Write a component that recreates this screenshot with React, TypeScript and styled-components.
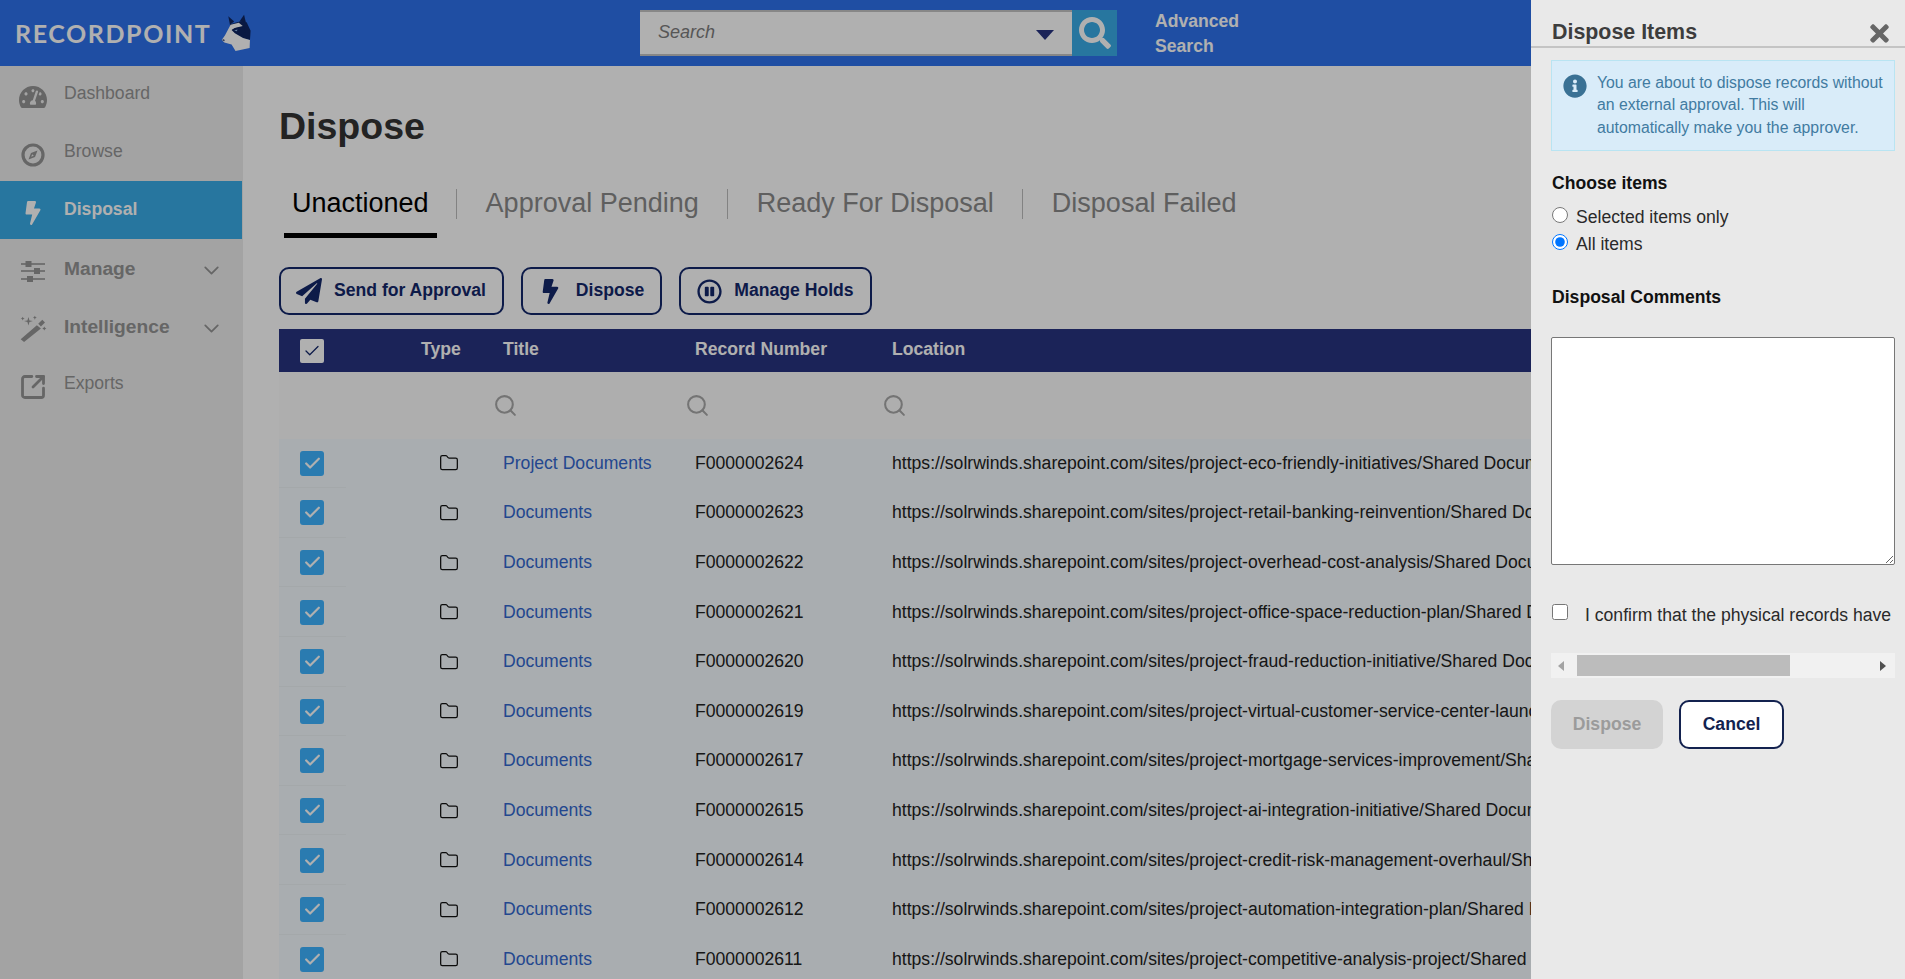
import React from 'react';
import styled, { createGlobalStyle } from 'styled-components';
import { Check, ChevronDown, Folder, Search, SquareArrowOutUpRight } from 'lucide-react';
import {
  FaBolt,
  FaInfoCircle,
  FaPaperPlane,
  FaRegPauseCircle,
  FaSearch,
  FaTachometerAlt,
  FaTimes,
} from 'react-icons/fa';

const NAVY = '#14286b';

const BASE_URL = 'https://solrwinds.sharepoint.com/sites/';

// the panel hides the end of each location, so only the part in view is kept
const records = [
  { id: 'F0000002624', title: 'Project Documents', path: 'project-eco-friendly-initiatives/Shared Docum' },
  { id: 'F0000002623', title: 'Documents', path: 'project-retail-banking-reinvention/Shared Doc' },
  { id: 'F0000002622', title: 'Documents', path: 'project-overhead-cost-analysis/Shared Docum' },
  { id: 'F0000002621', title: 'Documents', path: 'project-office-space-reduction-plan/Shared Do' },
  { id: 'F0000002620', title: 'Documents', path: 'project-fraud-reduction-initiative/Shared Doc' },
  { id: 'F0000002619', title: 'Documents', path: 'project-virtual-customer-service-center-launc' },
  { id: 'F0000002617', title: 'Documents', path: 'project-mortgage-services-improvement/Shar' },
  { id: 'F0000002615', title: 'Documents', path: 'project-ai-integration-initiative/Shared Docum' },
  { id: 'F0000002614', title: 'Documents', path: 'project-credit-risk-management-overhaul/Sha' },
  { id: 'F0000002612', title: 'Documents', path: 'project-automation-integration-plan/Shared Do' },
  { id: 'F0000002611', title: 'Documents', path: 'project-competitive-analysis-project/Shared D' },
];

const WolfLogo = () => (
  <svg width="33" height="41" viewBox="15 10 100 125">
    <polygon points="40,20 58,36 45,46" fill="#0f2560" />
    <polygon points="88,15 94,40 74,36" fill="#0f2560" />
    <polygon points="45,44 75,36 96,38 108,64 106,92 85,88 60,74 48,62" fill="#0f2560" />
    <polygon points="47,46 72,40 84,50 60,56 50,62 60,72 85,86 106,92 105,117 62,126 50,106 28,100 20,92 30,78" fill="#fff" />
    <polygon points="52,60 62,56 88,52 92,70 78,76 62,70" fill="#0f2560" />
    <polygon points="58,63 68,60 66,66" fill="#8db4e2" />
    <polygon points="20,92 27,90 29,96" fill="#0f2560" />
  </svg>
);

const CompassIcon = () => (
  <svg width="24" height="24" viewBox="0 0 24 24" fill="currentColor">
    <circle cx="12" cy="12" r="10" fill="none" stroke="currentColor" strokeWidth="3.2" />
    <path d="M16.5 7.5 14 14l-6.5 2.5L10 10zM11.2 11.2 10.2 13.8l2.6-1z" fillRule="evenodd" />
  </svg>
);

const SlidersIcon = () => (
  <svg width="24" height="22" viewBox="0 0 24 22" fill="currentColor">
    <rect x="0" y="3.2" width="24" height="1.6" />
    <rect x="0" y="10.2" width="24" height="1.6" />
    <rect x="0" y="18.2" width="24" height="1.6" />
    <rect x="4.5" y="1" width="6" height="6" />
    <rect x="13" y="8" width="6" height="6" />
    <rect x="6" y="16" width="6" height="6" />
  </svg>
);

const WandIcon = () => (
  <svg width="27" height="27" viewBox="30 190 80 80" fill="currentColor">
    <path d="M84 216 96 204 104 212 92 224zM32 262 80 220 92 230 42 270z" />
    <path d="M55 196 58 206 68 208 58 211 55 221 52 211 42 208 52 206z" />
    <path d="M38 195 40 199 44 200 40 202 38 206 36 202 32 200 36 199z" />
    <path d="M74 192 76 196 80 198 76 199 74 204 72 199 68 198 72 196z" />
    <path d="M102 224 104 228 108 230 104 232 102 236 100 232 96 230 100 228z" />
  </svg>
);

const navItems = [
  { label: 'Dashboard', icon: <FaTachometerAlt size={28} /> },
  { label: 'Browse', icon: <CompassIcon /> },
  { label: 'Disposal', icon: <FaBolt size={24} />, active: true },
  { label: 'Manage', icon: <SlidersIcon />, group: true },
  { label: 'Intelligence', icon: <WandIcon />, group: true },
  { label: 'Exports', icon: <SquareArrowOutUpRight size={30} strokeWidth={2.4} /> },
];

const tabs = ['Unactioned', 'Approval Pending', 'Ready For Disposal', 'Disposal Failed'];

const App: React.FC = () => {
  return (
    <Page>
      <GlobalStyle />
      <Header>
        <Brand>
          <BrandName>RECORDPOINT</BrandName>
          <WolfLogo />
        </Brand>
        <SearchBox>
          <SearchInput placeholder="Search" />
          <Caret />
        </SearchBox>
        <SearchButton>
          <FaSearch size={32} />
        </SearchButton>
        <AdvancedLink>
          Advanced
          <br />
          Search
        </AdvancedLink>
      </Header>

      <Body>
        <Sidebar>
          {navItems.map((item) => (
            <NavItem key={item.label} $active={item.active}>
              <NavIcon>{item.icon}</NavIcon>
              <NavLabel $active={item.active} $group={item.group}>
                {item.label}
              </NavLabel>
              {item.group && (
                <NavChevron>
                  <ChevronDown size={25} strokeWidth={1.7} />
                </NavChevron>
              )}
            </NavItem>
          ))}
        </Sidebar>

        <Main>
          <Title>Dispose</Title>
          <TabBar>
            {tabs.map((tab, i) => (
              <React.Fragment key={tab}>
                {i > 0 && <TabDivider />}
                <Tab $active={i === 0}>{tab}</Tab>
              </React.Fragment>
            ))}
          </TabBar>

          <Actions>
            <ActionButton>
              <ActionIcon>
                <FaPaperPlane size={26} />
              </ActionIcon>
              Send for Approval
            </ActionButton>
            <ActionButton>
              <ActionIcon>
                <FaBolt size={25} />
              </ActionIcon>
              Dispose
            </ActionButton>
            <ActionButton>
              <ActionIcon>
                <FaRegPauseCircle size={25} />
              </ActionIcon>
              Manage Holds
            </ActionButton>
          </Actions>

          <Table>
            <colgroup>
              <col width={142} />
              <col width={82} />
              <col width={192} />
              <col width={197} />
              <col />
            </colgroup>
            <thead>
              <HeadRow>
                <th>
                  <HeadCheck>
                    <Check size={18} strokeWidth={1.7} />
                  </HeadCheck>
                </th>
                <HeadCell>Type</HeadCell>
                <HeadCell>Title</HeadCell>
                <HeadCell>Record Number</HeadCell>
                <HeadCell>Location</HeadCell>
              </HeadRow>
              <FilterRow>
                <td />
                <td />
                <td>
                  <FilterIcon>
                    <Search size={25} strokeWidth={2} />
                  </FilterIcon>
                </td>
                <td>
                  <FilterIcon>
                    <Search size={25} strokeWidth={2} />
                  </FilterIcon>
                </td>
                <td>
                  <FilterIcon>
                    <Search size={25} strokeWidth={2} />
                  </FilterIcon>
                </td>
              </FilterRow>
            </thead>
            <tbody>
              {records.map((record) => (
                <Row key={record.id}>
                  <CheckCell>
                    <RowCheck>
                      <Check size={19} strokeWidth={2.8} />
                    </RowCheck>
                  </CheckCell>
                  <td>
                    <FolderIcon>
                      <Folder size={20} strokeWidth={1.5} />
                    </FolderIcon>
                  </td>
                  <td>
                    <TitleLink>{record.title}</TitleLink>
                  </td>
                  <td>{record.id}</td>
                  <LocationCell>
                    {BASE_URL}
                    {record.path}
                  </LocationCell>
                </Row>
              ))}
            </tbody>
          </Table>
        </Main>
      </Body>

      <Overlay />

      <Panel>
        <PanelHeader>
          <PanelTitle>Dispose Items</PanelTitle>
          <CloseButton>
            <FaTimes size={27} />
          </CloseButton>
        </PanelHeader>
        <PanelBody>
          <Alert>
            <AlertIcon>
              <FaInfoCircle size={24} />
            </AlertIcon>
            <span>You are about to dispose records without an external approval. This will automatically make you the approver.</span>
          </Alert>

          <FieldLabel>Choose items</FieldLabel>
          <RadioRow>
            <RadioInput type="radio" name="items" />
            Selected items only
          </RadioRow>
          <RadioRow>
            <RadioInput type="radio" name="items" defaultChecked />
            All items
          </RadioRow>

          <CommentsLabel>Disposal Comments</CommentsLabel>
          <Comments />

          <ConfirmRow>
            <ConfirmBox type="checkbox" />
            <ConfirmText>I confirm that the physical records have</ConfirmText>
          </ConfirmRow>
          <FakeScrollbar>
            <ScrollArrow $dir="left" />
            <ScrollThumb />
            <ScrollArrow $dir="right" />
          </FakeScrollbar>

          <PanelActions>
            <DisabledButton disabled>Dispose</DisabledButton>
            <CancelButton>Cancel</CancelButton>
          </PanelActions>
        </PanelBody>
      </Panel>
    </Page>
  );
};

export default App;

const GlobalStyle = createGlobalStyle`
  html, body {
    margin: 0;
    height: 100%;
    overflow: hidden;
  }
  body {
    font-family: "Liberation Sans", Arial, sans-serif;
    font-size: 17.6px;
    color: #222;
    background: #fff;
  }
  * {
    box-sizing: border-box;
  }
`;

const Page = styled.div`
  height: 100vh;
  display: flex;
  flex-direction: column;
  overflow: hidden;
`;

const Header = styled.header`
  flex: 0 0 66px;
  display: flex;
  align-items: center;
  background: #2d72ec;
`;

const Brand = styled.div`
  width: 640px;
  display: flex;
  align-items: center;
  padding-left: 15px;
  gap: 9px;
`;

const BrandName = styled.span`
  font-family: Lato, sans-serif;
  font-size: 25px;
  font-weight: 700;
  letter-spacing: 1.6px;
  color: #fff;
`;

const SearchBox = styled.div`
  position: relative;
  width: 432px;
  height: 46px;
  background: #fff;
  border-top: 2px solid #c4c4c4;
  border-bottom: 2px solid #c4c4c4;
`;

const SearchInput = styled.input`
  width: 100%;
  height: 100%;
  border: 0;
  outline: 0;
  padding: 0 50px 2px 18px;
  background: transparent;
  font-family: "Liberation Sans", Arial, sans-serif;
  font-size: 18px;
  font-style: italic;

  &::placeholder {
    color: #7d7d7d;
    opacity: 1;
  }
`;

const Caret = styled.span`
  position: absolute;
  top: 18px;
  right: 18px;
  border-left: 9px solid transparent;
  border-right: 9px solid transparent;
  border-top: 10px solid #283480;
`;

const SearchButton = styled.div`
  width: 45px;
  height: 46px;
  display: flex;
  align-items: center;
  justify-content: center;
  background: #39abe6;
  color: #fff;
`;

const AdvancedLink = styled.div`
  margin: 2px 0 0 38px;
  font-size: 17.6px;
  font-weight: 700;
  line-height: 25.5px;
  color: #fff;
`;

const Body = styled.div`
  flex: 1;
  display: flex;
  min-height: 0;
`;

const Sidebar = styled.nav`
  flex: 0 0 243px;
  background: #ececec;
`;

const NavItem = styled.div<{ $active?: boolean }>`
  height: 58px;
  margin-right: 1px;
  display: flex;
  align-items: center;
  background: ${(p) => (p.$active ? '#39abe6' : 'transparent')};
  color: ${(p) => (p.$active ? '#fff' : '#949494')};

  &:first-child {
    height: 57px;
  }
`;

const NavIcon = styled.span`
  width: 28px;
  margin: 5px 0 0 19px;
  display: flex;
  justify-content: center;
`;

const NavLabel = styled.span<{ $active?: boolean; $group?: boolean }>`
  margin: ${(p) => (p.$group ? '1px' : '-2px')} 0 0 17px;
  font-size: ${(p) => (p.$group ? '19.2px' : '17.6px')};
  font-weight: ${(p) => (p.$active || p.$group ? 700 : 400)};
`;

const NavChevron = styled.span`
  margin: 4px 18px 0 auto;
  display: flex;
`;

const Main = styled.main`
  flex: 1;
  min-width: 0;
  padding: 37px 30px 0 36px;
`;

const Title = styled.h1`
  margin: 0;
  font-size: 37.5px;
  line-height: 46px;
  font-weight: 700;
  color: #333;
`;

const TabBar = styled.div`
  display: flex;
  align-items: flex-start;
  margin: 27px 0 0 5px;
  height: 62px;
`;

const Tab = styled.div<{ $active?: boolean }>`
  height: 62px;
  padding: 0 ${(p) => (p.$active ? '8px' : '10px')} 0 8px;
  margin-right: ${(p) => (p.$active ? '1px' : '0')};
  font-size: 27px;
  line-height: 54px;
  color: ${(p) => (p.$active ? '#000' : '#8a8a8a')};
  border-bottom: 5px solid ${(p) => (p.$active ? '#000' : 'transparent')};
`;

const TabDivider = styled.span`
  width: 1px;
  height: 30px;
  margin: 13px 21px 0 18px;
  background: #bdbdbd;
`;

const Actions = styled.div`
  display: flex;
  gap: 17px;
  margin-top: 29px;
`;

const ActionButton = styled.button`
  height: 48px;
  display: flex;
  align-items: center;
  gap: 12px;
  padding: 0 16px 2px 15px;
  border: 2px solid ${NAVY};
  border-radius: 10px;
  background: #fff;
  color: ${NAVY};
  font-family: inherit;
  font-size: 17.6px;
  font-weight: 700;
`;

const ActionIcon = styled.span`
  width: 26px;
  margin-top: 2px;
  display: flex;
  justify-content: center;
`;

const Table = styled.table`
  width: 100%;
  margin-top: 14px;
  border-collapse: collapse;
  table-layout: fixed;

  th,
  td {
    padding: 0;
  }
`;

const HeadRow = styled.tr`
  height: 43px;
  background: #283480;
`;

const HeadCell = styled.th`
  padding-bottom: 3px !important;
  text-align: left;
  font-weight: 700;
  color: #fff;
`;

const HeadCheck = styled.span`
  width: 24px;
  height: 24px;
  margin-left: 21px;
  display: flex;
  align-items: center;
  justify-content: center;
  border-radius: 2px;
  background: #fff;
  color: ${NAVY};
`;

const FilterRow = styled.tr`
  height: 66.6px;
  background: #fdfdfd;
`;

const FilterIcon = styled.span`
  display: flex;
  margin-left: -10px;
  color: #a8a8a8;
`;

const Row = styled.tr`
  height: 49.6px;
  background: #f5fbff;
`;

const CheckCell = styled.td`
  background: linear-gradient(#eef3f6, #eef3f6) no-repeat left bottom / 67px 1px;
`;

const RowCheck = styled.span`
  width: 24px;
  height: 25px;
  margin-left: 21px;
  display: flex;
  align-items: center;
  justify-content: center;
  border-radius: 3px;
  background: #3db3ff;
  color: #fff;
`;

const FolderIcon = styled.span`
  display: flex;
  margin-left: 18px;
  color: #111;
`;

const TitleLink = styled.a`
  color: #3468cf;
`;

const LocationCell = styled.td`
  white-space: nowrap;
`;

const Overlay = styled.div`
  position: fixed;
  inset: 0;
  background: rgba(0, 0, 0, 0.31);
`;

const Panel = styled.aside`
  position: fixed;
  top: 0;
  right: 0;
  bottom: 0;
  width: 374px;
  background: #e9e9e9;
`;

const PanelHeader = styled.div`
  height: 48px;
  display: flex;
  align-items: flex-start;
  justify-content: space-between;
  padding: 19px 12px 0 21px;
  border-bottom: 2px solid #c4c4c4;
`;

const PanelTitle = styled.h2`
  margin: 0;
  font-size: 21.4px;
  line-height: 26px;
  font-weight: 700;
  color: #3d3d3d;
`;

const CloseButton = styled.span`
  display: flex;
  margin-top: 1px;
  color: #666;
`;

const PanelBody = styled.div`
  padding: 12px 10px 0 20px;
`;

const Alert = styled.div`
  height: 91px;
  display: flex;
  gap: 10px;
  padding: 11px 8px 0 11px;
  border: 1px solid #b9e4f2;
  background: #d9ecf9;
  color: #417ba1;
  font-size: 15.8px;
  line-height: 22.4px;
`;

const AlertIcon = styled.span`
  flex: none;
  margin-top: 2px;
  display: flex;
  height: 24px;
  color: #3a7194;
`;

const FieldLabel = styled.div`
  margin: 22px 0 0 1px;
  font-weight: 700;
  line-height: 21px;
  color: #111;
`;

const RadioRow = styled.label`
  height: 27px;
  display: flex;
  align-items: center;
  gap: 8px;
  margin-left: 1px;
  color: #2a2a2a;

  &:first-of-type {
    margin-top: 10px;
  }
`;

const RadioInput = styled.input`
  width: 16px;
  height: 16px;
  margin: -6px 0 0;
`;

const CommentsLabel = styled(FieldLabel)`
  margin-top: 29px;
`;

const Comments = styled.textarea`
  display: block;
  width: 100%;
  height: 228px;
  margin-top: 29px;
  border: 1px solid #777;
  border-radius: 2px;
  background: #fff;
`;

const ConfirmRow = styled.label`
  display: flex;
  align-items: center;
  gap: 17px;
  margin: 38px 0 0 1px;
  height: 22px;
  overflow: hidden;
  white-space: nowrap;
  color: #2a2a2a;
`;

const ConfirmBox = styled.input`
  flex: none;
  width: 16px;
  height: 16px;
  margin: -4px 0 0;
`;

const ConfirmText = styled.span`
  margin-top: 3px;
`;

const FakeScrollbar = styled.div`
  height: 25px;
  margin-top: 28px;
  display: flex;
  align-items: center;
  background: #f1f1f1;
`;

const ScrollArrow = styled.span<{ $dir: 'left' | 'right' }>`
  width: 0;
  height: 0;
  border-top: 5.5px solid transparent;
  border-bottom: 5.5px solid transparent;
  ${(p) =>
    p.$dir === 'left'
      ? 'border-right: 6px solid #a3a3a3; margin: 0 13px 0 7px;'
      : 'border-left: 6px solid #505050; margin-left: auto; margin-right: 9px;'}
`;

const ScrollThumb = styled.span`
  width: 213px;
  height: 21px;
  background: #bcbcbc;
`;

const PanelActions = styled.div`
  display: flex;
  gap: 16px;
  margin-top: 22px;
`;

const DisabledButton = styled.button`
  width: 112px;
  height: 49px;
  border: 0;
  border-radius: 10px;
  background: #d3d3d3;
  color: #9b9b9b;
  font-family: inherit;
  font-size: 17.6px;
  font-weight: 700;
`;

const CancelButton = styled.button`
  width: 105px;
  height: 49px;
  border: 2px solid #13224f;
  border-radius: 10px;
  background: #fff;
  color: #13224f;
  font-family: inherit;
  font-size: 17.6px;
  font-weight: 700;
`;
